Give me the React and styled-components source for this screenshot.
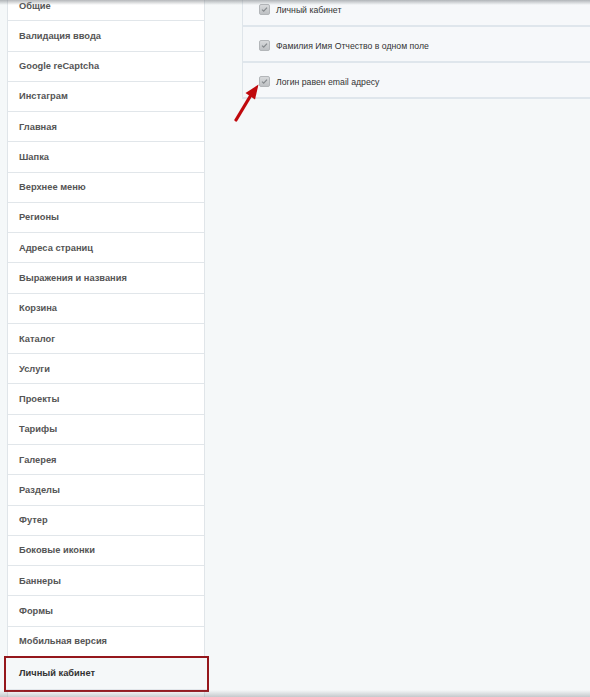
import React from "react";
import styled, { createGlobalStyle } from "styled-components";

const GlobalStyle = createGlobalStyle`
    html, body
    {
        margin: 0;
        padding: 0;
        background: #f5f8f9;
        font-family: Arial, "Liberation Sans", sans-serif;
        overflow: hidden;
    }
`;

const sections = [
    "Общие",
    "Валидация ввода",
    "Google reCaptcha",
    "Инстаграм",
    "Главная",
    "Шапка",
    "Верхнее меню",
    "Регионы",
    "Адреса страниц",
    "Выражения и названия",
    "Корзина",
    "Каталог",
    "Услуги",
    "Проекты",
    "Тарифы",
    "Галерея",
    "Разделы",
    "Футер",
    "Боковые иконки",
    "Баннеры",
    "Формы",
    "Мобильная версия",
    "Личный кабинет",
];

const options = [
    "Личный кабинет",
    "Фамилия Имя Отчество в одном поле",
    "Логин равен email адресу",
];

const Checkbox = () =>
{
    return(
        <CheckIcon width="11" height="11" viewBox="0 0 11 11">
            <defs>
                <linearGradient id="cbFill" x1="0" y1="0" x2="0" y2="1">
                    <stop offset="0" stopColor="#d9dbdd" />
                    <stop offset="1" stopColor="#bcbfc2" />
                </linearGradient>
            </defs>
            <rect x="0.5" y="0.5" width="10" height="10" rx="1.5" fill="url(#cbFill)" stroke="#b3b6b9" />
            <path d="M3 5.6 L4.7 7.2 L8 3.6" fill="none" stroke="#85898d" strokeWidth="1.2" />
        </CheckIcon>
    )
}

const App = () =>
{
    const active = "Личный кабинет";

    return(
        <>
            <GlobalStyle />
            <Page>
                <Sidebar>
                    {sections.map((name, i) => (
                        <SideItem key={i} $active={i === sections.length - 1 && name === active}>
                            {name}
                        </SideItem>
                    ))}
                </Sidebar>
                <Content>
                    <Panel>
                        {options.map(label => (
                            <OptionRow key={label}>
                                <Checkbox />
                                <span>{label}</span>
                            </OptionRow>
                        ))}
                    </Panel>
                    <Arrow width="30" height="40" viewBox="0 0 30 40">
                        <path d="M4 37 L19 12" stroke="#c0090d" strokeWidth="3.2" strokeLinecap="round" />
                        <polygon points="26.5,1.5 13.5,10 23,16.5" fill="#c0090d" />
                    </Arrow>
                </Content>
                <TopShade />
                <BottomShade />
            </Page>
        </>
    )
}

export default App;

const Page = styled.div`
    position: relative;
    display: flex;
    align-items: flex-start;
    height: 697px;
    overflow: hidden;
`;

const Sidebar = styled.nav`
    width: 196px;
    margin: -9px 0 0 7px;
    background: #fff;
    border-left: 1px solid #e0e5e9;
    border-right: 1px solid #e0e5e9;
    flex-shrink: 0;
    min-height: 720px;
`;

const SideItem = styled.div`
    box-sizing: border-box;
    height: 30.27px;
    display: flex;
    align-items: center;
    padding-left: 11px;
    border-bottom: 1px solid #e1e6ea;
    font-size: 9.3px;
    font-weight: bold;
    color: ${p => p.$active ? "#333" : "#555"};
    background: ${p => p.$active ? "#f5f8f9" : "#fff"};
    ${p => p.$active && `
        outline: 2px solid #95171c;
        outline-offset: 0px;
        margin: 1px -3px 0 -2px;
        padding-left: 13px;
        height: 32px;
    `}
`;

const Content = styled.main`
    position: relative;
    flex: 1;
    margin-left: 37px;
`;

const Panel = styled.section`
    margin-top: -9px;
    border-left: 1px solid #dfe5ea;
    background: #f6f8fa;
`;

const OptionRow = styled.div`
    box-sizing: border-box;
    display: flex;
    align-items: center;
    gap: 6px;
    height: 36px;
    padding: 3px 0 0 16px;
    border-bottom: 2px solid #dfe6ec;
    font-size: 8.7px;
    color: #333;
`;

const CheckIcon = styled.svg`
    flex-shrink: 0;
    display: block;
`;

const Arrow = styled.svg`
    position: absolute;
    left: -10px;
    top: 83px;
`;

const TopShade = styled.div`
    position: absolute;
    top: 0;
    left: 0;
    right: 0;
    height: 5px;
    background: linear-gradient(to bottom, rgba(120,125,130,0.55), rgba(120,125,130,0));
    pointer-events: none;
`;

const BottomShade = styled.div`
    position: absolute;
    bottom: 0;
    left: 0;
    right: 0;
    height: 7px;
    background: linear-gradient(to top, rgba(150,155,160,0.5), rgba(150,155,160,0));
    pointer-events: none;
`;
